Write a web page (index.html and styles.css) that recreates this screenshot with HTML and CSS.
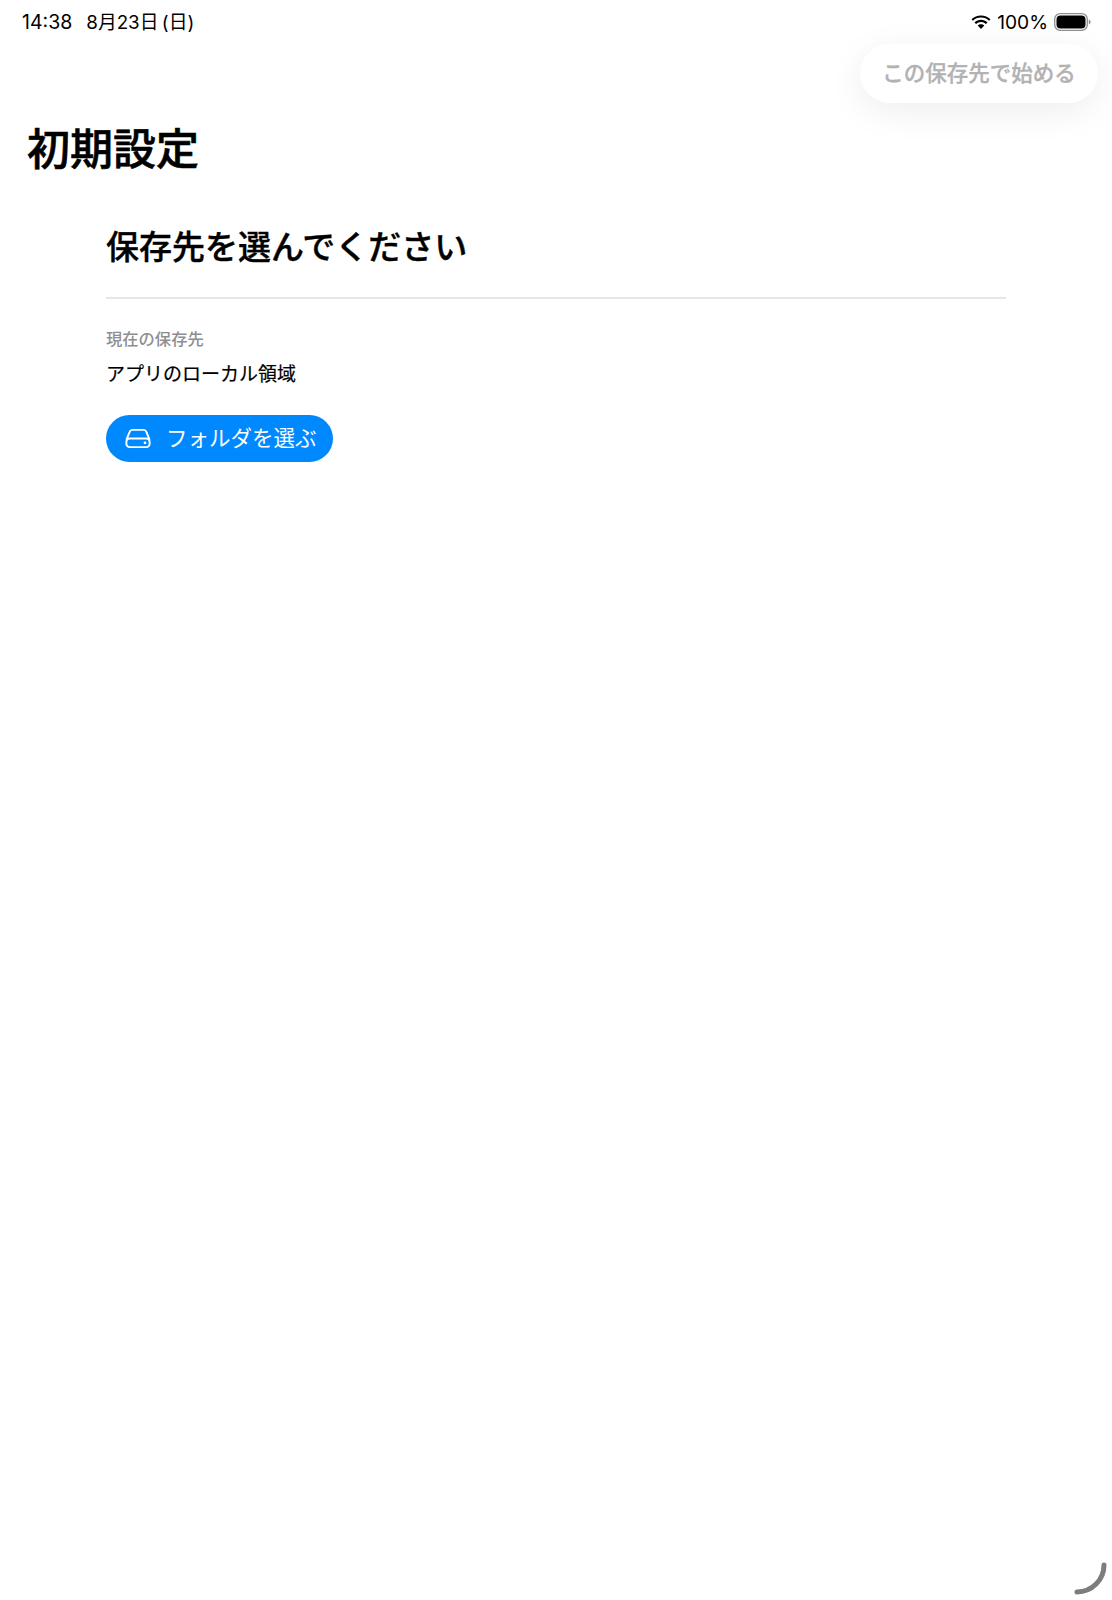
FILE: index.html
```html
<!DOCTYPE html>
<html lang="ja">

<head>
    <meta charset="UTF-8">
    <meta name="viewport" content="width=device-width, initial-scale=1.0">
    <title>初期設定</title>
    <link rel="stylesheet" href="styles.css">
</head>

<body>
    <div class="status-bar">
        <div class="status-left">
            <span>14:38</span>
            <span class="date">8月23日 (日)</span>
        </div>
        <div class="status-right">
            <svg class="wifi" width="20" height="15" viewBox="0 0 20 15">
                <path d="M10 2.6c3.1 0 5.9 1.200 8 3.200l1.500-1.600C17 1.800 13.700.4 10 .4S3 1.800.5 4.200L2 5.800c2.100-2 4.900-3.200 8-3.200z" fill="#000" />
                <path d="M10 7c1.900 0 3.600.7 4.900 2l1.600-1.600C14.800 5.700 12.500 4.700 10 4.700S5.200 5.700 3.500 7.400L5.100 9C6.400 7.700 8.100 7 10 7z" fill="#000" />
                <path d="M10 9.200c-1.300 0-2.400.5-3.300 1.300L10 14l3.300-3.500c-.9-.8-2-1.300-3.300-1.300z" fill="#000" />
            </svg>
            <span>100%</span>
            <svg class="battery" width="37" height="18" viewBox="0 0 37 18">
                <rect x="0.7" y="0.7" width="32.6" height="16.6" rx="5.5" fill="none" stroke="#8e8e8e" stroke-width="1.3" />
                <rect x="2.5" y="2.5" width="29" height="13" rx="4" fill="#000" />
                <path d="M34.8 6.500c1.100.4 1.800 1.400 1.800 2.500s-.7 2.100-1.800 2.500z" fill="#8e8e8e" />
            </svg>
        </div>
    </div>

    <div class="toolbar">
        <button class="start-btn" disabled>この保存先で始める</button>
    </div>

    <h1 class="page-title">初期設定</h1>

    <main class="content">
        <h2 class="section-title">保存先を選んでください</h2>
        <hr class="divider">
        <p class="label">現在の保存先</p>
        <p class="value">アプリのローカル領域</p>
        <button class="folder-btn">
            <svg width="26" height="21" viewBox="0 0 28 22" fill="none" stroke="#fff" stroke-width="2.100" stroke-linejoin="round">
                <path d="M1.500 12.500 5 3.800C5.500 2.400 6.600 1.700 8 1.700h12c1.400 0 2.500.7 3 2.100l3.500 8.700" />
                <rect x="1.500" y="11" width="25" height="9.300" rx="3.500" />
                <circle cx="21.500" cy="15.700" r="1.500" fill="#fff" stroke="none" />
            </svg>
            <span class="folder-text">フォルダを選ぶ</span>
        </button>
    </main>

    <!-- 右下のインジケータ -->
    <svg class="corner-mark" width="36" height="36" viewBox="0 0 36 36" fill="none">
        <path d="M32 4A27 27 0 0 1 5 31" stroke="#7d7d7d" stroke-width="5" stroke-linecap="round" />
    </svg>
</body>

</html>
```

FILE: styles.css
```css
html,
body {
    margin: 0;
    padding: 0;
}

body {
    position: relative;
    width: 1112px;
    height: 1600px;
    overflow: hidden;
    background-color: #fff;
    color: #000;
    font-family: Inter, "Noto Sans CJK JP", sans-serif;
}

.status-bar {
    display: flex;
    justify-content: space-between;
    align-items: center;
    height: 44px;
    padding: 0 21px 0 22px;
    box-sizing: border-box;
    font-size: 19.5px;
    line-height: 24px;
}

.status-left {
    display: flex;
    align-items: baseline;
    gap: 14px;
}

.date {
    font-size: 18.8px;
    word-spacing: -2px;
}

.status-right {
    display: flex;
    align-items: center;
    gap: 6px;
    font-size: 19.2px;
}

.toolbar {
    display: flex;
    justify-content: flex-end;
    padding-right: 14px;
}

.start-btn {
    width: 238px;
    height: 59px;
    padding: 0 0 4px;
    border: none;
    border-radius: 30px;
    background-color: #fff;
    box-shadow: 0 8px 36px rgba(0, 0, 0, 0.07);
    color: #b2b2b2;
    font-family: inherit;
    font-size: 21.5px;
    font-weight: 500;
    -webkit-text-stroke: 0.3px #b2b2b2;
}

.page-title {
    margin: 21px 0 0 27px;
    font-size: 43px;
    font-weight: 500;
    line-height: 50px;
    -webkit-text-stroke: 0.6px #000;
}

.content {
    margin: 51px 106px 0;
}

.section-title {
    margin: 0;
    font-size: 33px;
    font-weight: 500;
    line-height: 44px;
    -webkit-text-stroke: 0.4px #000;
}

.divider {
    height: 2px;
    margin: 28px 0 0;
    border: none;
    background-color: #e6e6e6;
}

.label {
    margin: 30px 0 0;
    color: #8e8e93;
    font-size: 16.3px;
    font-weight: 500;
    line-height: 20px;
}

.value {
    margin: 13px 0 0;
    font-size: 19px;
    font-weight: 400;
    line-height: 26px;
    -webkit-text-stroke: 0.2px #000;
}

.folder-btn {
    display: flex;
    align-items: center;
    gap: 15px;
    height: 47px;
    margin-top: 27px;
    padding: 0 16px 0 19px;
    border: none;
    border-radius: 24px;
    background-color: #0088ff;
    color: #fff;
    font-family: inherit;
    font-size: 21.5px;
    font-weight: 400;
}

.folder-text {
    padding-bottom: 4px;
}

.corner-mark {
    position: absolute;
    right: 4px;
    bottom: 3px;
}
```
